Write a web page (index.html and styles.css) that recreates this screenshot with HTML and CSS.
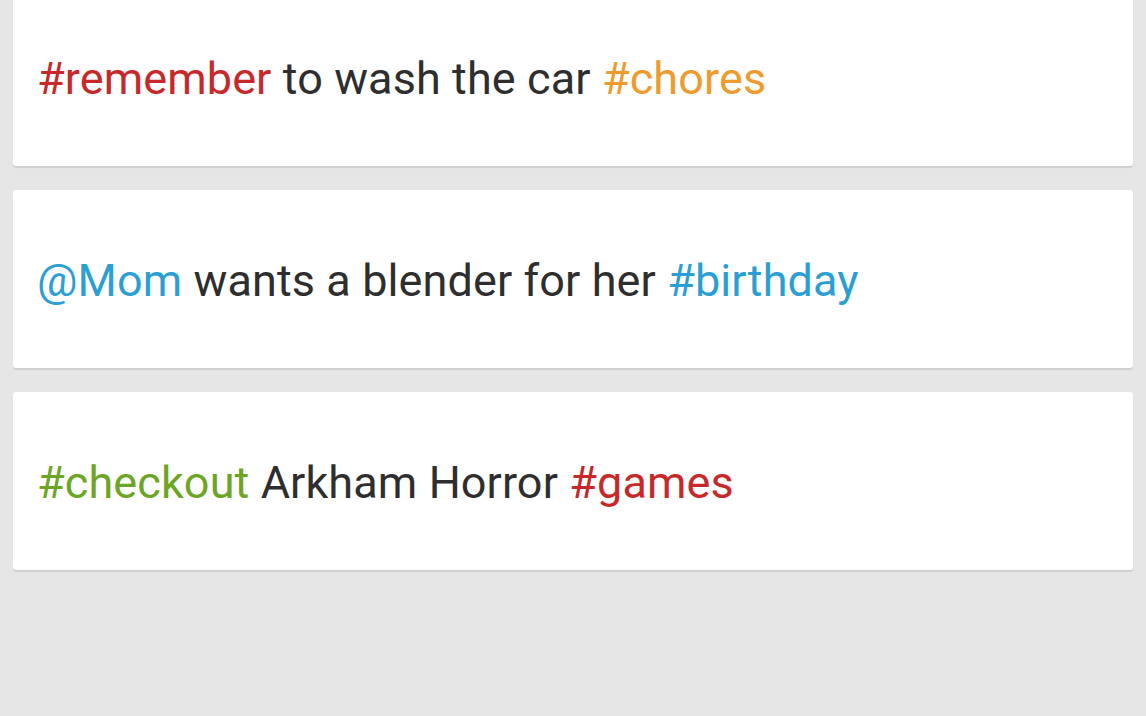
FILE: index.html
```html
<!DOCTYPE html>
<html>
<head>
<meta charset="utf-8">
<link rel="stylesheet" href="styles.css">
</head>
<body>
<div class="list">
  <div class="card"><p class="note"><span class="tag red">#remember</span> to wash the car <span class="tag orange">#chores</span></p></div>
  <div class="card"><p class="note"><span class="tag blue">@Mom</span> wants a blender for her <span class="tag blue">#birthday</span></p></div>
  <div class="card"><p class="note"><span class="tag green">#checkout</span> Arkham Horror <span class="tag red">#games</span></p></div>
</div>
</body>
</html>
```
FILE: styles.css
```css
html, body {
  margin: 0;
  padding: 0;
  background: #e6e6e6;
  height: 100%;
  overflow: hidden;
}
.list {
  display: flex;
  flex-direction: column;
  gap: 24px;
  padding: 0 13px;
  margin-top: -12px;
}
.card {
  background: #ffffff;
  height: 178px;
  border-radius: 3px;
  box-shadow: 0 2px 1px #cfcfcf;
  display: flex;
  align-items: center;
  padding: 0 24px;
}
.note {
  margin: 0;
  padding-top: 3px;
  font-family: Roboto, "Noto Sans", sans-serif;
  font-size: 45px;
  letter-spacing: 0.1px;
  color: #2e2e2e;
  white-space: nowrap;
}
.red { color: #c7282a; }
.orange { color: #ef9a2d; }
.blue { color: #2b9fd3; }
.green { color: #6da526; }
```
